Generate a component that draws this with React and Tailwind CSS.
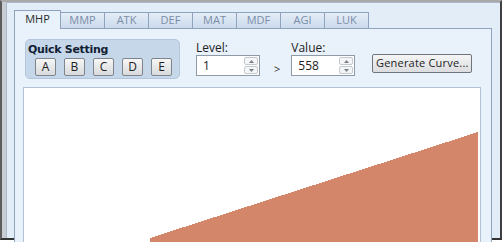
import React from "react"

const tabs = ["MHP", "MMP", "ATK", "DEF", "MAT", "MDF", "AGI", "LUK"]
const presets = ["A", "B", "C", "D", "E"]

const font = { fontFamily: '"Open Sans", "Liberation Sans", sans-serif' }

// small up/down spinner beside a number box
const Spinner = ({ value }) => (
  <div className="flex h-[21px] w-[64px] border border-[#8f9aa8] bg-white">
    <div className="flex flex-1 items-center pl-[6px] text-[12px] text-[#222]">{value}</div>
    <div className="flex w-[15px] flex-col gap-px py-px pr-px">
      <div className="flex flex-1 items-center justify-center rounded-[2px] border border-[#c4c9d0] bg-[#f4f5f7]">
        <svg width="5" height="3" viewBox="0 0 5 3"><path d="M0 3 L2.5 0 L5 3 Z" fill="#7a7f87" /></svg>
      </div>
      <div className="flex flex-1 items-center justify-center rounded-[2px] border border-[#c4c9d0] bg-[#f4f5f7]">
        <svg width="5" height="3" viewBox="0 0 5 3"><path d="M0 0 L2.5 3 L5 0 Z" fill="#7a7f87" /></svg>
      </div>
    </div>
  </div>
)

const App = () => {
  return (
    <div className="h-[242px] w-[504px] overflow-hidden bg-white" style={font}>
      <div className="flex h-[240px] w-[502px] border-t-2 border-r-2 border-b-2 border-l-2 border-t-[#a9a9a9] border-r-[#3f3f3f] border-b-[#333] border-l-[#5c5c5c]">
        <div className="flex flex-1 border-l-4 border-[#c9cdd2]">
          <div className="flex flex-1 flex-col border-t border-l border-[#a9b8ca] bg-[#e3edf8] pt-[7px] pl-[7px]">
            {/* tab strip */}
            <div className="relative z-10 flex h-[18px] items-end">
              {tabs.map((t, i) =>
                i === 0 ? (
                  <div
                    key={t}
                    className="-mb-px flex h-[19px] w-[47px] items-center justify-center border-t border-r border-l border-[#8fa3bf] bg-[#e9f1fa] pb-px text-[11px] text-[#2b2b2b]"
                  >
                    {t}
                  </div>
                ) : (
                  <div
                    key={t}
                    className="-ml-px flex h-[16px] w-[45px] items-center justify-center border-t border-r border-l border-[#8fa3bf] bg-gradient-to-b from-[#e4edf7] to-[#cbdaeb] text-[11px] text-[#7b8da8]"
                  >
                    {t}
                  </div>
                )
              )}
            </div>

            {/* tab page */}
            <div className="flex w-[478px] flex-1 flex-col border border-[#8fa3bf] bg-[#e9f1fa] pt-[10px] pl-[8px]">
              <div className="flex items-start">
                <div className="ml-[2px] flex h-[40px] w-[155px] flex-col rounded-[5px] border border-[#b3c6dd] bg-[#c6d7ea] pt-[3px] pl-[2px]">
                  <div
                    className="leading-[14px] font-bold text-[#121e33]"
                    style={{ fontFamily: '"DejaVu Sans", sans-serif', fontSize: "11px", letterSpacing: "-0.3px" }}
                  >
                    Quick Setting
                  </div>
                  <div className="mt-[1px] ml-[7px] flex gap-[8px]">
                    {presets.map((p) => (
                      <div
                        key={p}
                        className="flex h-[18px] w-[21px] items-center justify-center rounded-[2px] border border-[#7f858c] bg-gradient-to-b from-[#f6f6f6] to-[#d9dadc] text-[12px] text-[#222]"
                      >
                        {p}
                      </div>
                    ))}
                  </div>
                </div>

                <div className="ml-[16px] flex flex-col pt-[2px]">
                  <div className="text-[12px] leading-[14px] text-[#222]">Level:</div>
                  <div className="pt-0">
                    <Spinner value="1" />
                  </div>
                </div>

                <div className="ml-[14px] pt-[24px] text-[11px] leading-[12px] text-[#333]">&gt;</div>

                <div className="ml-[11px] flex flex-col pt-[2px]">
                  <div className="text-[12px] leading-[14px] text-[#222]">Value:</div>
                  <div className="pt-0">
                    <Spinner value="558" />
                  </div>
                </div>

                <div className="mt-[15px] ml-[17px] flex h-[19px] w-[100px] items-center justify-center rounded-[2px] border border-[#70757c] bg-gradient-to-b from-[#f5f5f5] to-[#dcdde0] text-[11px] tracking-[0.2px] text-[#222]">
                  Generate Curve...
                </div>
              </div>

              {/* curve preview */}
              <div className="mt-[8px] mr-[10px] flex-1 border border-[#b2c1d4] bg-white">
                <svg width="455" height="160" viewBox="0 0 455 160" shapeRendering="crispEdges">
                  <polygon points="126,150 454,44 454,160 126,160" fill="#d4866a" />
                </svg>
              </div>
            </div>
          </div>
        </div>
      </div>
    </div>
  )
}

export default App
